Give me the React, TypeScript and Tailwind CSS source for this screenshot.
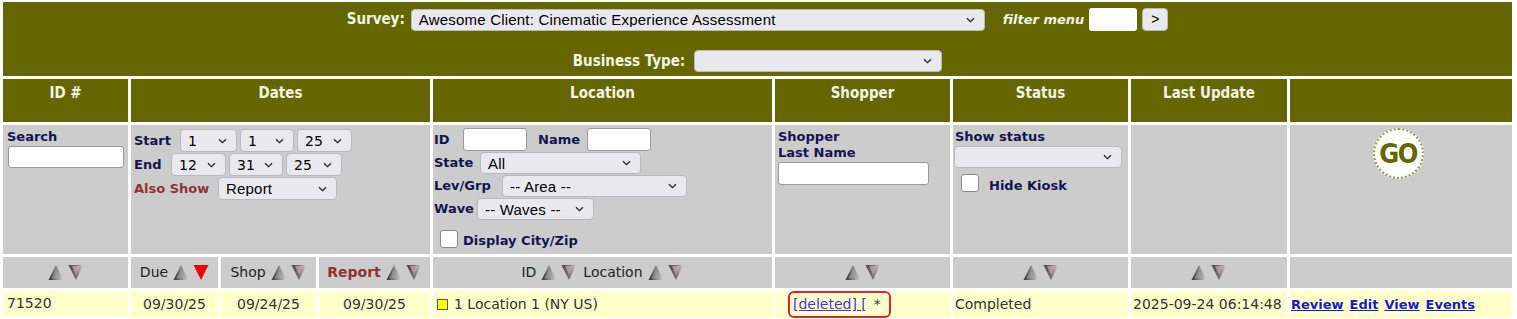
import React from "react";

const VERD = "font-['DejaVu_Sans',Verdana,sans-serif]";
const ARIAL = "font-['Liberation_Sans',Arial,sans-serif]";

function Chevron() {
  return (
    <svg width="9" height="6" viewBox="0 0 9 6" className="shrink-0">
      <path d="M1 1.2 L4.5 4.6 L8 1.2" fill="none" stroke="#222" strokeWidth="1.3" />
    </svg>
  );
}

function Select({ w, h = 22, text = "", font = ARIAL, size = "text-[15px]" }: { w: number; h?: number; text?: string; font?: string; size?: string }) {
  return (
    <div
      style={{ width: w, height: h }}
      className={`flex shrink-0 items-center justify-between rounded-[4px] border border-[#b8b8c0] bg-[#e9e9ed] pl-[7px] pr-[9px] text-black ${font} ${size}`}
    >
      <span className="truncate leading-none tracking-[0.2px]">{text}</span>
      <Chevron />
    </div>
  );
}

function TextBox({ w, h = 23 }: { w: number; h?: number }) {
  return <div style={{ width: w, height: h }} className="shrink-0 rounded-[3px] border border-[#9a9a9a] bg-white" />;
}

function Check() {
  return <div className="h-[18px] w-[18px] shrink-0 rounded-[3px] border border-[#8a8a8a] bg-white" />;
}

function Up() {
  return (
    <svg width="16" height="17" viewBox="0 0 16 17" className="shrink-0">
      <defs>
        <linearGradient id="ug" x1="0" x2="1" y1="0" y2="0">
          <stop offset="0" stopColor="#2e2e2e" />
          <stop offset="0.45" stopColor="#7c7c7c" />
          <stop offset="1" stopColor="#d4d4d4" />
        </linearGradient>
      </defs>
      <polygon points="8,1 15.5,16 0.5,16" fill="url(#ug)" />
      <polygon points="8,5 12.5,14.5 3.5,14.5" fill="#a8a8a8" opacity="0.5" />
    </svg>
  );
}

function Down({ red = false }: { red?: boolean }) {
  return (
    <svg width="16" height="17" viewBox="0 0 16 17" className="shrink-0">
      <defs>
        <linearGradient id="dg" x1="0" x2="1" y1="0" y2="0">
          <stop offset="0" stopColor="#444" />
          <stop offset="0.5" stopColor="#7a6d72" />
          <stop offset="1" stopColor="#ddd2d6" />
        </linearGradient>
      </defs>
      {red ? (
        <polygon points="0.5,1 15.5,1 8,16" fill="#f00000" />
      ) : (
        <>
          <polygon points="0.5,1 15.5,1 8,16" fill="url(#dg)" />
          <polygon points="4,2 12,2 8,11" fill="#cfc4c8" opacity="0.55" />
        </>
      )}
    </svg>
  );
}

function Arrows({ red = false }: { red?: boolean }) {
  return (
    <span className="inline-flex items-center gap-[4px]">
      <Up />
      <Down red={red} />
    </span>
  );
}

const label = `${VERD} text-[13px] font-bold text-[#141452]`;
const head = `${VERD} bg-[#666600] pt-[3px] text-center text-[15px] font-bold text-[#f3f3e6] font-stretch-condensed`;
const sortCell = `${VERD} flex items-center justify-center gap-[5px] bg-[#cccccc] text-[14px] text-[#222]`;
const dataCell = `${VERD} flex items-center bg-[#ffffcc] text-[14px] text-[#333]`;

export default function App() {
  return (
    <div className="w-[1517px] bg-white pl-[3px] pt-[2px]">
      <div className="grid grid-cols-[125px_87px_95px_111px_339px_175px_175px_156px_222px] gap-[3px]">
        {/* survey band */}
        <div className="col-span-9 flex h-[74px] flex-col items-center bg-[#666600] pt-[6px]">
          <div className="flex items-center">
            <span className={`${VERD} text-[15px] font-bold text-[#f3f3e6] font-stretch-condensed`}>Survey:</span>
            <div className="ml-[6px]">
              <Select w={574} text="Awesome Client: Cinematic Experience Assessment" />
            </div>
            <span className={`${VERD} ml-[18px] text-[13px] font-bold italic text-[#f3f3e6]`}>filter menu</span>
            <div className="ml-[5px] h-[23px] w-[48px] rounded-[3px] bg-white" />
            <div className={`${ARIAL} ml-[5px] flex h-[23px] w-[26px] items-center justify-center rounded-[4px] border border-[#b8b8c0] bg-[#e9e9ed] text-[14px] text-black`}>&gt;</div>
          </div>
          <div className="mt-[19px] flex items-center">
            <span className={`${VERD} text-[15px] font-bold text-[#f3f3e6] font-stretch-condensed`}>Business Type:</span>
            <div className="ml-[9px]">
              <Select w={248} />
            </div>
          </div>
        </div>

        {/* header row */}
        <div className={`${head} h-[43px]`}>ID #</div>
        <div className={`${head} col-span-3`}>Dates</div>
        <div className={head}>Location</div>
        <div className={head}>Shopper</div>
        <div className={head}>Status</div>
        <div className={head}>Last Update</div>
        <div className={head} />

        {/* filter row */}
        <div className="flex h-[129px] flex-col bg-[#cccccc] pl-[4px] pt-[4px]">
          <span className={`${label} leading-[16px]`}>Search</span>
          <div className="ml-[1px] mt-[1px]">
            <TextBox w={116} h={22} />
          </div>
        </div>
        <div className="col-span-3 flex flex-col gap-[1px] bg-[#cccccc] pl-[3px] pt-[4px]">
          <div className="flex items-center">
            <span className={`${label} w-[46px]`}>Start</span>
            <div className="flex gap-[3px]">
              <Select w={57} h={23} text="1" font={VERD} size="text-[14px]" />
              <Select w={54} h={23} text="1" font={VERD} size="text-[14px]" />
              <Select w={55} h={23} text="25" font={VERD} size="text-[14px]" />
            </div>
          </div>
          <div className="flex items-center">
            <span className={`${label} w-[37px]`}>End</span>
            <div className="flex gap-[3px]">
              <Select w={55} h={23} text="12" font={VERD} size="text-[14px]" />
              <Select w={54} h={23} text="31" font={VERD} size="text-[14px]" />
              <Select w={56} h={23} text="25" font={VERD} size="text-[14px]" />
            </div>
          </div>
          <div className="flex items-center">
            <span className={`${VERD} w-[84px] text-[13px] font-bold text-[#8f3333]`}>Also Show</span>
            <Select w={119} h={23} text="Report" />
          </div>
        </div>
        <div className="flex flex-col gap-[1px] bg-[#cccccc] pl-[1px] pt-[3px]">
          <div className="flex items-center">
            <span className={`${label} w-[29px]`}>ID</span>
            <TextBox w={64} h={23} />
            <span className={`${label} ml-[11px] w-[49px]`}>Name</span>
            <TextBox w={64} h={23} />
          </div>
          <div className="flex items-center">
            <span className={`${label} w-[46px]`}>State</span>
            <Select w={161} h={22} text="All" />
          </div>
          <div className="flex items-center">
            <span className={`${label} w-[68px]`}>Lev/Grp</span>
            <Select w={185} h={22} text="-- Area --" />
          </div>
          <div className="flex items-center">
            <span className={`${label} w-[43px]`}>Wave</span>
            <Select w={117} h={22} text="-- Waves --" />
          </div>
          <div className="mt-[9px] flex items-end pl-[6px]">
            <Check />
            <span className={`${label} ml-[5px] text-[13.5px] leading-[14px]`}>Display City/Zip</span>
          </div>
        </div>
        <div className="flex flex-col bg-[#cccccc] pl-[3px] pt-[4px]">
          <span className={`${label} leading-[16px]`}>Shopper</span>
          <span className={`${label} leading-[16px]`}>Last Name</span>
          <div className="mt-[1px]">
            <TextBox w={151} h={23} />
          </div>
        </div>
        <div className="flex flex-col bg-[#cccccc] pl-[1px] pt-[4px]">
          <span className={`${label} pl-[1px] leading-[16px]`}>Show status</span>
          <div className="mt-[1px]">
            <Select w={168} h={22} />
          </div>
          <div className="mt-[6px] flex items-end pl-[7px]">
            <Check />
            <span className={`${label} ml-[10px] text-[13.5px] leading-[12px]`}>Hide Kiosk</span>
          </div>
        </div>
        <div className="bg-[#cccccc]" />
        <div className="flex justify-center bg-[#cccccc] pt-[3px] pr-[6px]">
          <div className="flex h-[51px] w-[51px] items-center justify-center rounded-full border-[2px] border-dotted border-[#9a9a55] bg-white">
            <span className={`${VERD} text-[27px] font-bold leading-none tracking-[-1.5px] text-[#666600] font-stretch-condensed`}>GO</span>
          </div>
        </div>

        {/* sort row */}
        <div className="flex h-[31px] items-center justify-center bg-[#cccccc]">
          <Arrows />
        </div>
        <div className={sortCell}>
          Due <Arrows red />
        </div>
        <div className={sortCell}>
          Shop <Arrows />
        </div>
        <div className={`${sortCell} font-bold !text-[#8f3333]`}>
          Report <Arrows />
        </div>
        <div className={sortCell}>
          ID <Arrows /> <span className="ml-[1px]">Location</span> <Arrows />
        </div>
        <div className="flex items-center justify-center bg-[#cccccc]">
          <Arrows />
        </div>
        <div className="flex items-center justify-center bg-[#cccccc]">
          <Arrows />
        </div>
        <div className="flex items-center justify-center bg-[#cccccc]">
          <Arrows />
        </div>
        <div className="bg-[#cccccc]" />

        {/* data row */}
        <div className={`${dataCell} h-[25px] pl-[4px]`}>71520</div>
        <div className={`${dataCell} justify-center`}>09/30/25</div>
        <div className={`${dataCell} justify-center`}>09/24/25</div>
        <div className={`${dataCell} justify-center`}>09/30/25</div>
        <div className={`${dataCell} pl-[4px]`}>
          <span className="mr-[6px] h-[11px] w-[11px] border border-[#555] bg-[#ffff00]" />
          1 Location 1 (NY US)
        </div>
        <div className={`${dataCell} pl-[13px]`}>
          <div className="flex h-[27px] items-center rounded-[6px] border-[2px] border-[#d8282e] pl-[3px] pr-[8px]">
            <a className="text-[#3b3bd6] underline">[deleted] [</a>
            <span className="ml-[7px]">*</span>
          </div>
        </div>
        <div className={`${dataCell} pl-[2px]`}>Completed</div>
        <div className={`${dataCell} pl-[2px]`}>2025-09-24 06:14:48</div>
        <div className={`${dataCell} gap-[6px] pl-[1px] !text-[13px] font-bold !text-[#1a1acc]`}>
          <a className="underline">Review</a>
          <a className="underline">Edit</a>
          <a className="underline">View</a>
          <a className="underline">Events</a>
        </div>
      </div>
    </div>
  );
}
